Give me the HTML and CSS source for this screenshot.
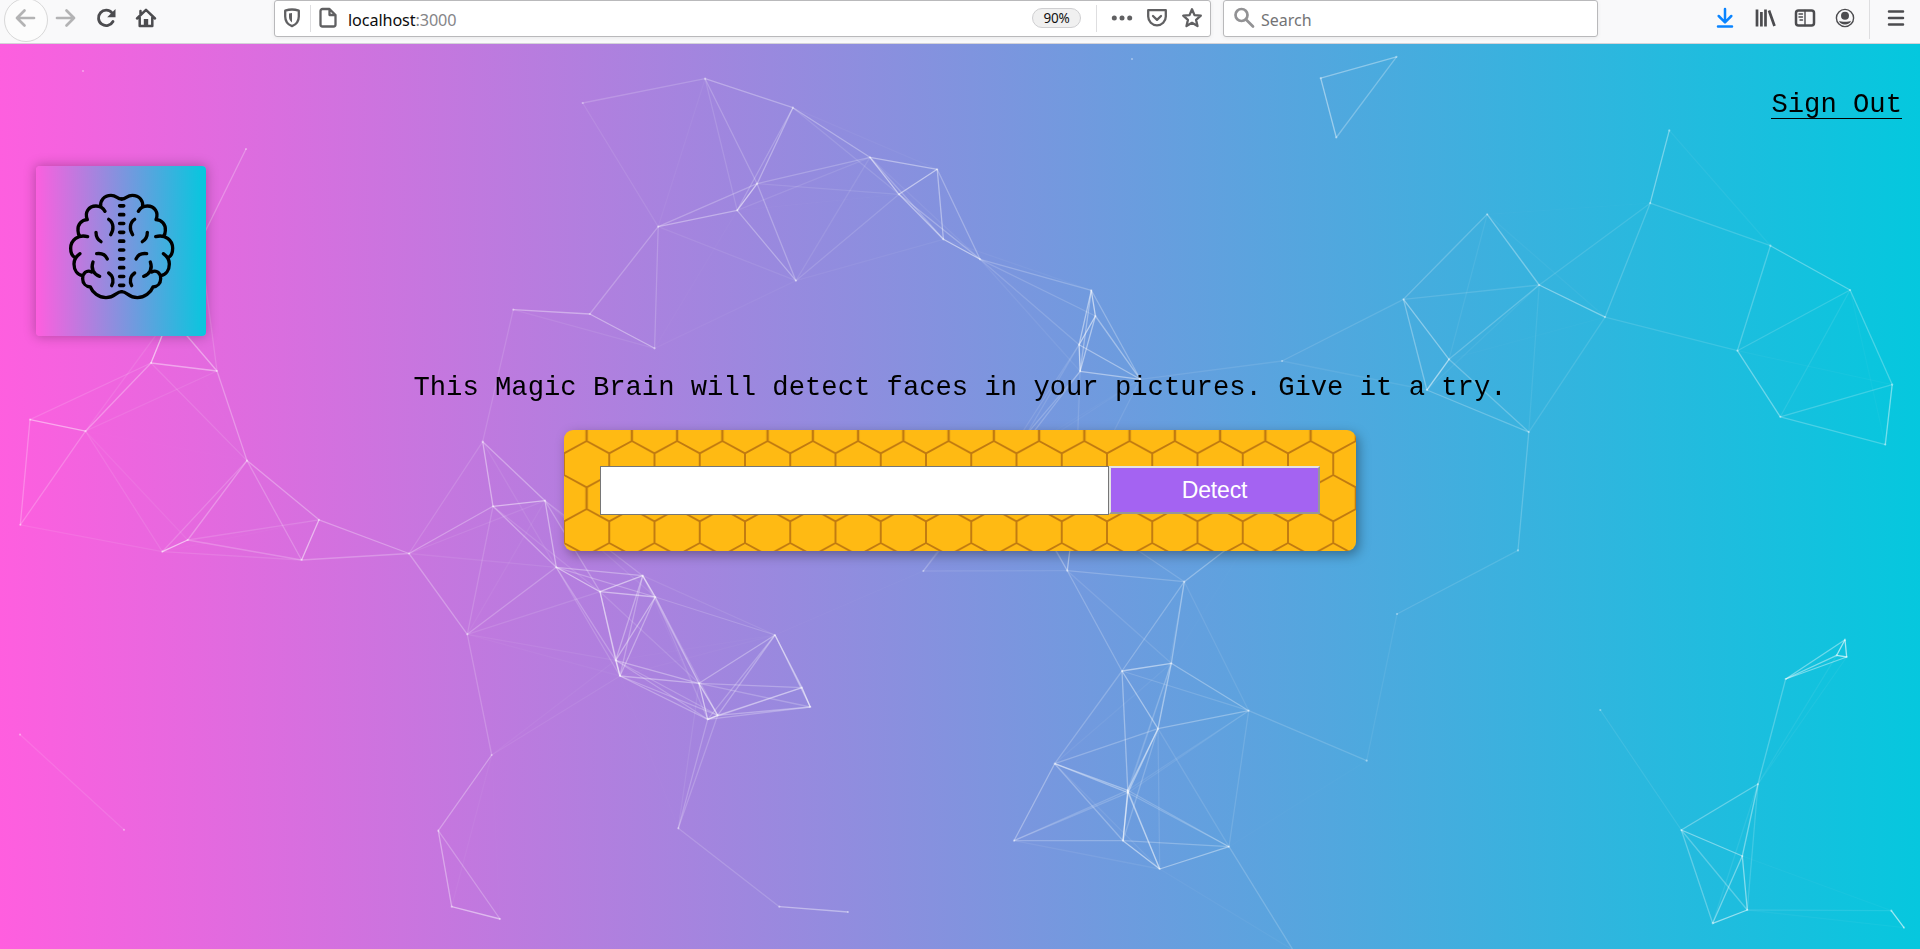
FILE: index.html
```html
<!DOCTYPE html>
<html lang="en">
<head>
<meta charset="utf-8">
<title>Magic Brain</title>
<link rel="stylesheet" href="styles.css">
</head>
<body>
<header class="toolbar">
  <div class="cell cell-back"><svg class="icon faded" viewBox="0 0 22 22"><path d="M20 11H3M10.500 3.500L3 11l7.500 7.500"/></svg></div>
  <div class="cell"><svg class="icon faded" viewBox="0 0 22 22"><path d="M2 11h17M11.500 3.500L19 11l-7.500 7.500"/></svg></div>
  <div class="cell"><svg class="icon reload" viewBox="0 0 22 22"><path d="M18 14.500A7.700 7.700 0 1 1 17 5.800"/><path class="solid" d="M20.500 2v8.300H12.200z"/></svg></div>
  <div class="cell"><svg class="icon" viewBox="0 0 22 22"><path d="M2 11.500L11 2.800l9 8.700M4.700 10.500v8.600h12.600v-8.600M5.500 8V4"/><path class="solid" d="M8.800 19v-7h4.400v7z"/></svg></div>
  <div class="field field-url">
    <svg class="icon shield" viewBox="0 0 22 22"><path d="M11 2.500c2.800 0 5 .6 6.800 1.200v5.800c0 4.700-2.600 8-6.800 9.600-4.200-1.600-6.800-4.900-6.800-9.600V3.700C6 3.100 8.200 2.500 11 2.500z"/><path class="solid" d="M11 6v9.500c-2-1.400-3-3.200-3-5.700V6.600z"/></svg>
    <span class="rule"></span>
    <svg class="icon page" viewBox="0 0 22 22"><path d="M5.500 2h7l6 6v9.500a2 2 0 0 1-2 2h-11a2 2 0 0 1-2-2V4a2 2 0 0 1 2-2zM12.500 2.500V8H18"/></svg>
    <span class="address">localhost<span class="port">:3000</span></span>
    <span class="zoom">90%</span>
    <span class="rule"></span>
    <svg class="icon dots" viewBox="0 0 22 22"><circle class="solid" cx="3.300" cy="11" r="2.500"/><circle class="solid" cx="11" cy="11" r="2.500"/><circle class="solid" cx="18.700" cy="11" r="2.500"/></svg>
    <svg class="icon pocket" viewBox="0 0 22 22"><path d="M2.200 3.200h17.600v6.300a8.800 8.800 0 0 1-17.600 0zM7 9l4 3.800L15 9"/></svg>
    <svg class="icon star" viewBox="0 0 22 22"><path d="M11 2.300l2.500 5.800 6.300.6-4.700 4.200 1.400 6.200-5.500-3.300-5.500 3.300 1.400-6.200-4.700-4.200 6.300-.6z"/></svg>
  </div>
  <div class="field field-search">
    <svg class="icon glass" viewBox="0 0 22 22"><circle cx="8.500" cy="8" r="6"/><path d="M13 12.500l7 7"/></svg>
    <span class="hint">Search</span>
  </div>
  <div class="actions">
    <div class="cell"><svg class="icon blue" viewBox="0 0 22 22"><path d="M11 2v13M4.700 9l6.300 6.300L17.300 9M4 19.500h14"/></svg></div>
    <div class="cell"><svg class="icon library" viewBox="0 0 22 22"><path d="M3 2.500v17M7.400 5v14.500M11.500 2.500v17M15 3.500l5.500 15.500"/></svg></div>
    <div class="cell"><svg class="icon" viewBox="0 0 22 22"><rect x="2" y="3.500" width="18" height="15" rx="2.500"/><path class="thin" d="M11 3.500v15M5 7h3.500M5 10h3.500M6 13h2.500"/></svg></div>
    <div class="cell"><svg class="icon" viewBox="0 0 22 22"><circle class="thin" cx="11" cy="11" r="8.600"/><circle class="solid" cx="11" cy="8.700" r="4"/><path class="solid" d="M5 13.700c2 1.300 10 1.300 12 0-1 5-11 5-12 0z"/></svg></div>
    <span class="rule rule-tall"></span>
    <div class="cell"><svg class="icon" viewBox="0 0 22 22"><path d="M4 4.500h14M4 11h14M4 17.500h14"/></svg></div>
  </div>
</header>
<main class="app">
  <canvas class="particles" id="particles" width="1920" height="905"></canvas>
  <nav class="nav"><a class="signout">Sign Out</a></nav>
  <div class="logo">
    <svg class="brain" viewBox="108 108 510 510">
      <defs>
        <g id="lobe">
          <path d="M365 207C378 208 380 196 397 196C418 196 430 212 428 230M415 244C420 235 430 228 442 228C464 228 477 248 468 269C485 270 498 282 496 302C496 310 494 315 490 319M467 320C495 312 518 330 518 355C518 367 513 378 506 382M490 371C500 378 508 388 508 402C508 420 498 434 482 437M431 439C448 434 459 416 451 396M455 426C470 418 482 430 482 446C482 460 472 470 459 471C452 488 434 503 412 503C385 503 382 485 365 485"/>
          <path d="M404 268C388 278 388 300 398 314M442 307C442 320 436 330 427 335M440 371C425 369 413 376 408 387M404 429C390 438 388 455 395 467"/>
        </g>
      </defs>
      <use href="#lobe"/>
      <use href="#lobe" transform="translate(730 0) scale(-1 1)"/>
      <path class="seam" d="M359 227.500h12M359 254h12M359 280.500h12M359 307h12M359 333.500h12M359 360h12M359 386.500h12M359 413h12M359 439.500h12M359 466h12"/>
    </svg>
  </div>
  <p class="lead">This Magic Brain will detect faces in your pictures. Give it a try.</p>
  <div class="form">
    <svg class="comb" width="792" height="121">
      <defs>
        <pattern id="hex" width="45.250" height="68" patternUnits="userSpaceOnUse">
          <path d="M22.625 -1V11L0 23.300V45L22.625 57.300V69M22.625 11L45.250 23.300V45L22.625 57.300"/>
          <path class="heavy" d="M22.625 -1V11M22.625 57.300V69"/>
        </pattern>
      </defs>
      <rect width="792" height="121" fill="url(#hex)"/>
    </svg>
    <input class="url" type="text">
    <button class="detect">Detect</button>
  </div>
</main>
<script src="particles.js"></script>
</body>
</html>
```
FILE: styles.css
```css
* { box-sizing: border-box; }
body { margin: 0; height: 949px; overflow: hidden; display: flex; flex-direction: column; }

.toolbar { height: 44px; flex: none; display: flex; align-items: flex-start; padding-left: 5px; background: #f9f9fa; border-bottom: 1px solid #d4d3d8; font-family: "Noto Sans", "Open Sans", sans-serif; overflow: hidden; }
.cell { width: 40px; height: 36px; flex: none; display: flex; align-items: center; justify-content: center; }
.cell-back { position: relative; margin-right: 1px; }
.cell-back::before { content: ""; position: absolute; left: -1px; top: -2px; width: 42px; height: 42px; border: 1px solid #d8d8d8; border-radius: 50%; background: #fcfcfc; }
.cell-back .icon { position: relative; }
.icon { width: 22px; height: 22px; flex: none; fill: none; stroke: #4c4c4f; stroke-width: 2.5; stroke-linecap: round; stroke-linejoin: round; }
.icon .solid { fill: #4c4c4f; stroke: none; }
.icon .thin { stroke-width: 1.4; }
.faded { stroke: #b3b3b4; stroke-width: 2.7; }
.reload { stroke-width: 2.8; }
.blue { stroke: #0a84ff; }
.library { stroke-linecap: butt; stroke-width: 2.7; }
.field { height: 37px; flex: none; display: flex; align-items: center; background: #fff; border: 1px solid #b9b9bb; border-radius: 3px; box-shadow: 0 1px 4px rgba(0, 0, 0, .07); padding-bottom: 1px; }
.field-url { width: 937px; margin-left: 108px; padding-left: 6px; }
.field .icon { stroke: #606062; stroke-width: 2.3; }
.field .icon .solid { fill: #606062; }
.rule { width: 1px; height: 27px; background: #dedee0; }
.shield { margin-right: 7px; }
.page { margin-left: 6px; }
.address { margin-left: 9px; flex: 1; font-size: 16.2px; letter-spacing: -.1px; color: #0c0c0d; padding-top: 3px; }
.port { color: #858588; }
.zoom { width: 49px; height: 20px; margin-right: 15px; border: 1px solid #cfcfd1; border-radius: 10px; background: #f0f0f0; font-size: 13.5px; line-height: 18px; text-align: center; letter-spacing: -.3px; color: #111; }
.dots { margin: 0 13px 0 14px; }
.pocket { margin-right: 13px; }
.star { margin-right: 7px; }
.field-search { width: 375px; margin-left: 12px; padding-left: 9px; }
.field .glass { stroke: #929294; stroke-width: 2.7; }
.hint { margin-left: 6px; font-size: 16px; color: #737375; padding-top: 3px; }
.actions { display: flex; margin-left: 107px; }
.rule-tall { height: 39px; margin: 0 6px 0 4px; }

.app { position: relative; flex: 1; display: flex; flex-direction: column; background: linear-gradient(89deg, #ff5edf 0%, #04c8de 100%); font-family: "Courier New", "Liberation Mono", monospace; }
.particles { position: absolute; left: 0; top: 0; }
.nav { position: relative; height: 122px; flex: none; display: flex; justify-content: flex-end; align-items: flex-start; padding: 46px 18px 0 0; }
.signout { font-size: 27.2px; line-height: 30px; height: 29px; color: #000; border-bottom: 1px solid #000; }
.logo { position: relative; width: 170px; height: 170px; flex: none; margin-left: 36px; border-radius: 4px; background: linear-gradient(89deg, #ff5edf 0%, #04c8de 100%); box-shadow: 0 0 12px 1px rgba(0, 0, 0, .25); }
.brain { display: block; width: 170px; height: 170px; fill: none; stroke: #000; stroke-width: 10; stroke-linecap: round; stroke-linejoin: round; }
.seam { stroke-width: 11; }
.lead { position: relative; margin: 36px 0 26px; font-size: 27.2px; line-height: 32px; text-align: center; color: #000; }
.form { position: relative; align-self: center; width: 792px; height: 121px; display: flex; align-items: flex-start; padding: 36px; border-radius: 9px; background: #ffba13; box-shadow: 3px 4px 12px rgba(0, 0, 0, .34); }
.comb { position: absolute; left: 0; top: 0; border-radius: 9px; }
.comb path { fill: none; stroke: #c07a10; stroke-width: 1.9; }
.comb .heavy { stroke-width: 2.4; }
.url { position: relative; width: 509px; height: 49px; margin: 0; border: 1px solid #767676; background: #fff; outline: 0; }
.detect { position: relative; width: 211px; height: 48px; margin: 0; padding: 0; border: 2px solid; border-color: #e3e3e3 #979797 #979797 #e3e3e3; background: #a463f2; color: #fff; font: 23px "Liberation Sans", Arial, sans-serif; letter-spacing: -.2px; }
```
FILE: particles.js
```js
// Particle positions, in window pixels.
var nodes = [
  [582.7,103],[705.1,78.7],[792.9,107.7],[869.9,157.3],[937.2,169.3],[899,194.3],[757.1,183.7],[737.2,210.3],
  [658.2,226.7],[795.9,280.7],[943.4,239.3],[980.1,259.3],[1091.3,290.3],[1095.4,316],[1079.1,344.7],[1080.1,371.3],
  [1140.3,379.3],[513.3,309.7],[589.8,314],[654.6,348.3],[1132,59],[83,71],
  [151,363],[217,371],[30,419.6],[85.5,431.2],[20.3,524.8],[247,460.6],[162.3,551.7],[187.7,540],[319,519.8],
  [301.6,560],[409,553.5],[20,734.6],[124,829.8],[246,149],[170,316],[200,242],
  [482.7,441.7],[493,506.3],[545,500.7],[467.3,634.3],[556.3,567.3],[600,591.7],[642.7,575.7],[655.3,597],
  [615.7,660.3],[620,676],[699,683.3],[775,635],[802,687.7],[810.3,707],[717.7,715.3],[707.7,719.3],[491.7,755],
  [438.3,830.7],[451.7,906.7],[500,919],[678.3,828.3],[779.3,906.7],[848,912],
  [923.3,571],[1067.3,570.7],[1184.3,581.7],[1122,671],[1171.3,663.3],[1158,728.7],[1248.7,710.7],[1054.7,763.7],
  [1127.7,790.3],[1128,792.7],[1014,840.7],[1123,840.7],[1229,846.7],[1159.7,869],[1366.7,760.7],[1397,614],
  [1293,950],[1003,462],[1009,464],[1075,508],[1258,525],
  [1320.7,78.2],[1396.5,56.8],[1336.3,137.5],[1669.3,130.4],[1650.2,203.2],[1770.4,245.7],[1850.1,290],
  [1737.4,350.7],[1892.2,384.6],[1780.3,416.8],[1885.3,444.6],[1605.1,317.1],[1539.2,285],[1487.2,214.3],
  [1403.5,299.3],[1449,359.3],[1426.9,390],[1282.1,361],[1528.8,432.1],[1518,550.4],
  [1845,639.7],[1836.7,655.3],[1846.7,657],[1785.7,679],[1600.3,710],[1758,784],[1681.3,830],[1742.3,856],
  [1747.3,910],[1712.7,923.3],[1891.3,910.7],[1904,927.7]
];
var reach = 167;
var ctx = document.getElementById("particles").getContext("2d");
ctx.translate(0, -44);
ctx.lineWidth = 1.3;
nodes.forEach(function (a, i) {
  nodes.slice(i + 1).forEach(function (b) {
    var d = Math.hypot(a[0] - b[0], a[1] - b[1]);
    if (d >= reach) return;
    ctx.strokeStyle = "rgba(255,255,255," + 0.68 * (1 - d / reach) + ")";
    ctx.beginPath();
    ctx.moveTo(a[0], a[1]);
    ctx.lineTo(b[0], b[1]);
    ctx.stroke();
  });
  ctx.fillStyle = "rgba(255,255,255,.38)";
  ctx.beginPath();
  ctx.arc(a[0], a[1], 1.1, 0, Math.PI * 2);
  ctx.fill();
});
```
